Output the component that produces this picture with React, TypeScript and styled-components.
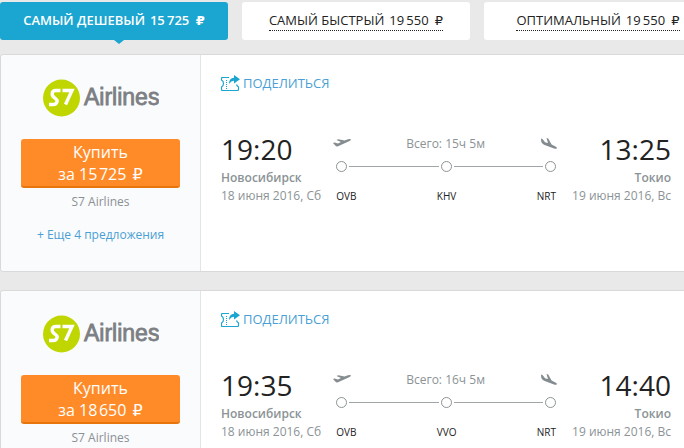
import React from "react";
import styled, { createGlobalStyle, css } from "styled-components";

const GlobalStyle = createGlobalStyle`
  *, *::before, *::after { box-sizing: border-box; }
  html { scrollbar-width: none; }
  body {
    margin: 0;
    overflow-x: hidden;
    background: #e9e9e9;
    color: #222;
    font-family: "Open Sans", "Noto Sans", sans-serif;
    font-size: 13px;
    line-height: 18px;
  }
  button { font: inherit; cursor: pointer; border: 0; }
`;

const Tabs = styled.nav`
  display: grid;
  grid-template-columns: repeat(3, minmax(228px, 1fr));
  gap: 14px;
  padding-top: 2px;
`;

const Tab = styled.button<{ $active?: boolean }>`
  position: relative;
  height: 38px;
  padding: 0;
  border-radius: 3px;
  background: #fff;
  color: #222;
  white-space: nowrap;
  ${(p) =>
    p.$active &&
    css`
      background: #1ba5d1;
      color: #fff;
      font-weight: 600;
      &::after {
        content: "";
        position: absolute;
        top: 100%;
        left: 50%;
        border: 5px solid transparent;
        border-top: 4px solid #1ba5d1;
        border-bottom: 0;
      }
    `}
`;

const TabLabel = styled.span<{ $active?: boolean }>`
  display: inline-flex;
  gap: 5px;
  border-bottom: 1px ${(p) => (p.$active ? "solid transparent" : "dotted #222")};
`;

const Ruble = styled.span`
  margin-left: 2px;
  font-family: "DejaVu Sans", sans-serif;
`;

const Results = styled.main`
  display: flex;
  flex-direction: column;
  gap: 18px;
  padding-top: 14px;
`;

const Card = styled.article`
  display: grid;
  grid-template-columns: 200px 1fr;
  min-height: 218px;
  border: 1px solid #d9d9d9;
  border-right: 0;
  border-radius: 4px 0 0 4px;
  background: #fff;
  overflow: hidden;
`;

const Offer = styled.aside`
  display: flex;
  flex-direction: column;
  align-items: center;
  padding: 24px 20px 0;
  border-right: 1px solid #e2e4e5;
  background: #fafbfd;
`;

const BuyButton = styled.button`
  width: 100%;
  height: 49px;
  margin-top: 22px;
  padding: 2px 0 1px;
  border-bottom: 2px solid #e8740c;
  border-radius: 3px;
  background: #ff8b28;
  color: #fff;
  font-size: 16px;
  line-height: 22px;
`;

const BuyLine = styled.span`
  display: block;
`;

const Seller = styled.div`
  margin-top: 5px;
  color: #8b9093;
  font-size: 12px;
`;

const MoreLink = styled.a`
  margin-top: 15px;
  color: #4a9fd4;
  font-size: 12px;
  text-decoration: none;
  white-space: nowrap;
`;

const Details = styled.section`
  padding: 19px 13px 0 20px;
`;

const Share = styled.button`
  display: flex;
  align-items: center;
  gap: 3px;
  padding: 0;
  background: none;
  color: #4a9fd4;
`;

const Flight = styled.div`
  display: grid;
  grid-template-columns: auto 1fr auto;
  column-gap: 12px;
  margin-top: 38px;
`;

const Stop = styled.div<{ $end?: boolean }>`
  color: #8b9396;
  font-size: 12px;
  text-align: ${(p) => (p.$end ? "right" : "left")};
  white-space: nowrap;
`;

const Time = styled.time`
  display: block;
  color: #222;
  font-size: 28px;
  line-height: 38px;
`;

const City = styled.div`
  margin-top: 1px;
  font-weight: 600;
`;

const Route = styled.div`
  padding-top: 5px;
`;

const RouteHead = styled.div`
  display: flex;
  align-items: center;
  justify-content: space-between;
  padding-right: 2px;
  color: #8b9396;
  font-size: 12px;
`;

const Track = styled.div`
  display: flex;
  align-items: center;
  gap: 2px;
  margin-top: 8px;
  padding: 0 4px 0 3px;
`;

const Dot = styled.span`
  width: 11px;
  height: 11px;
  border: 1px solid #8b9396;
  border-radius: 50%;
`;

const Leg = styled.span`
  flex: 1;
  height: 1px;
  background: #a0a5a7;
`;

const Airports = styled.div`
  display: flex;
  justify-content: space-between;
  margin-top: 15px;
  padding: 0 4px 0 3px;
  font-size: 10px;
`;

function AirlineLogo() {
  return (
    <svg width="116" height="38" viewBox="0 0 116 38" role="img" aria-label="S7 Airlines">
      <circle cx="18.5" cy="19" r="18.5" fill="#bfd600" />
      <path
        d="M17.500 11.500H12.800Q9.500 11.500 9.200 14.500Q9 17 11.200 18.500L13 20Q15 21.500 13.500 24Q12.500 25.500 10.500 25.500H6M19.500 11.500H29L22.500 25.500"
        fill="none"
        stroke="#fff"
        strokeWidth="3.400"
      />
      <text x="41" y="26" fill="#7c7f83" stroke="#7c7f83" strokeWidth="0.8" fontFamily="Liberation Sans, sans-serif" fontSize="23">
        Airlines
      </text>
    </svg>
  );
}

function ShareIcon() {
  return (
    <svg width="19" height="17" viewBox="0 0 19 17" aria-hidden="true">
      <path
        d="M8 2.500H1.500Q.5 2.500 .5 3.500V5Q2.500 6 2.500 8.500T.5 12V14.500Q.5 15.500 1.500 15.500H16.500Q17.500 15.500 17.500 14.500V12Q16 11 15.500 9.500"
        fill="none"
        stroke="#1ba5d1"
        strokeWidth="1.200"
      />
      <path d="M5.500 5V14" stroke="#1ba5d1" strokeDasharray="1 1" />
      <path d="M8 9Q8 3 13 2.800V0L19 4.200L13 8.500V5.800Q10 5.800 8 9Z" fill="#1ba5d1" />
    </svg>
  );
}

function PlaneIcon({ landing }: { landing?: boolean }) {
  return (
    <svg width="18" height="14" viewBox="0 0 18 14" aria-hidden="true">
      {landing ? (
        <path d="M1 1.500L2.500 2L5 5.200L8 6L6.500 1L8.200 1.500L11.600 7.500L15.500 9.500Q17.500 10.500 16.800 11.500Q16 12 14 11.500L4 7.800Q1.500 6.500 1.200 4.500Z" fill="#858c8f" />
      ) : (
        <path d="M0 6L1.500 5.500L5 6.500L8 5L3.500 3L5.300 2.300L11.500 3.500L15 2.300Q17.500 1.500 18 2.500Q18 3.500 15.500 4.500L5 9.300Q3.300 9.800 2.500 8.800Z" fill="#858c8f" />
      )}
    </svg>
  );
}

interface TicketData {
  price: string;
  more?: string;
  depart: string;
  arrive: string;
  total: string;
  via: string;
}

function Ticket({ price, more, depart, arrive, total, via }: TicketData) {
  return (
    <Card>
      <Offer>
        <AirlineLogo />
        <BuyButton type="button">
          <BuyLine>Купить</BuyLine>
          <BuyLine>
            за {price} <Ruble>₽</Ruble>
          </BuyLine>
        </BuyButton>
        <Seller>S7 Airlines</Seller>
        {more && <MoreLink href="#offers">{more}</MoreLink>}
      </Offer>
      <Details>
        <Share type="button">
          <ShareIcon />
          ПОДЕЛИТЬСЯ
        </Share>
        <Flight>
          <Stop>
            <Time>{depart}</Time>
            <City>Новосибирск</City>
            <div>18 июня 2016, Сб</div>
          </Stop>
          <Route>
            <RouteHead>
              <PlaneIcon />
              <span>Всего: {total}</span>
              <PlaneIcon landing />
            </RouteHead>
            <Track>
              <Dot />
              <Leg />
              <Dot />
              <Leg />
              <Dot />
            </Track>
            <Airports>
              <span>OVB</span>
              <span>{via}</span>
              <span>NRT</span>
            </Airports>
          </Route>
          <Stop $end>
            <Time>{arrive}</Time>
            <City>Токио</City>
            <div>19 июня 2016, Вс</div>
          </Stop>
        </Flight>
      </Details>
    </Card>
  );
}

const tabs = [
  { label: "САМЫЙ ДЕШЕВЫЙ", price: "15\u2009725", active: true },
  { label: "САМЫЙ БЫСТРЫЙ", price: "19\u2009550" },
  { label: "ОПТИМАЛЬНЫЙ", price: "19\u2009550" },
];

const tickets: TicketData[] = [
  { price: "15\u200A725", more: "+ Еще 4 предложения", depart: "19:20", arrive: "13:25", total: "15ч 5м", via: "KHV" },
  { price: "18\u200A650", depart: "19:35", arrive: "14:40", total: "16ч 5м", via: "VVO" },
];

export default function App() {
  return (
    <>
      <GlobalStyle />
      <Tabs>
        {tabs.map((t) => (
          <Tab key={t.label} type="button" $active={t.active}>
            <TabLabel $active={t.active}>
              <span>{t.label}</span>
              <span>
                {t.price}
                <Ruble> ₽</Ruble>
              </span>
            </TabLabel>
          </Tab>
        ))}
      </Tabs>
      <Results>
        {tickets.map((t) => (
          <Ticket key={t.depart} {...t} />
        ))}
      </Results>
    </>
  );
}
